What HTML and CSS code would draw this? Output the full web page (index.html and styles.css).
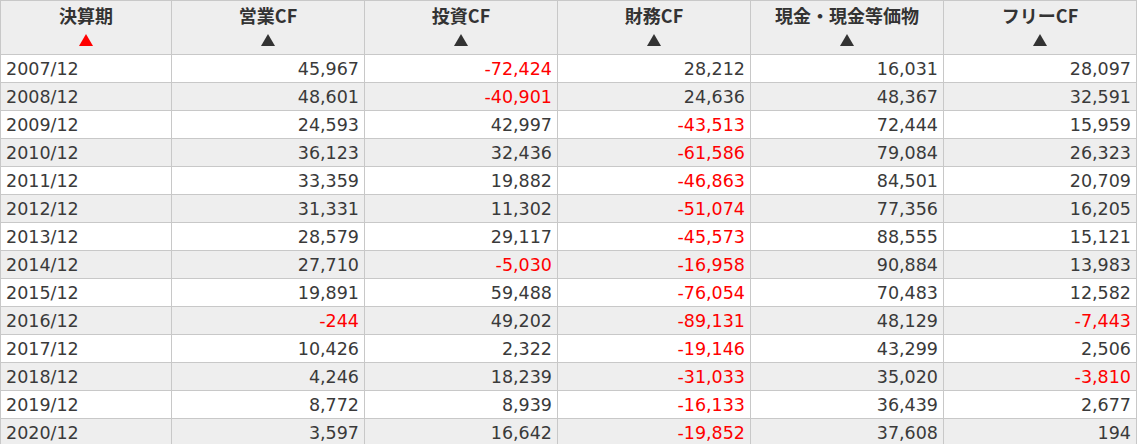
FILE: index.html
```html
<!DOCTYPE html>
<html lang="ja">
<head>
<meta charset="utf-8">
<title>CF</title>
<link rel="stylesheet" href="styles.css">
</head>
<body>
<table class="cf">
  <colgroup>
    <col class="c-date"><col class="c-num"><col class="c-num"><col class="c-num"><col class="c-num"><col class="c-num">
  </colgroup>
  <thead>
    <tr>
      <th><span class="label">決算期</span><span class="arrow active" aria-label="▲"></span></th>
      <th><span class="label">営業CF</span><span class="arrow" aria-label="▲"></span></th>
      <th><span class="label">投資CF</span><span class="arrow" aria-label="▲"></span></th>
      <th><span class="label">財務CF</span><span class="arrow" aria-label="▲"></span></th>
      <th><span class="label">現金・現金等価物</span><span class="arrow" aria-label="▲"></span></th>
      <th><span class="label">フリーCF</span><span class="arrow" aria-label="▲"></span></th>
    </tr>
  </thead>
  <tbody>
    <tr><td>2007/12</td><td>45,967</td><td class="neg">-72,424</td><td>28,212</td><td>16,031</td><td>28,097</td></tr>
    <tr><td>2008/12</td><td>48,601</td><td class="neg">-40,901</td><td>24,636</td><td>48,367</td><td>32,591</td></tr>
    <tr><td>2009/12</td><td>24,593</td><td>42,997</td><td class="neg">-43,513</td><td>72,444</td><td>15,959</td></tr>
    <tr><td>2010/12</td><td>36,123</td><td>32,436</td><td class="neg">-61,586</td><td>79,084</td><td>26,323</td></tr>
    <tr><td>2011/12</td><td>33,359</td><td>19,882</td><td class="neg">-46,863</td><td>84,501</td><td>20,709</td></tr>
    <tr><td>2012/12</td><td>31,331</td><td>11,302</td><td class="neg">-51,074</td><td>77,356</td><td>16,205</td></tr>
    <tr><td>2013/12</td><td>28,579</td><td>29,117</td><td class="neg">-45,573</td><td>88,555</td><td>15,121</td></tr>
    <tr><td>2014/12</td><td>27,710</td><td class="neg">-5,030</td><td class="neg">-16,958</td><td>90,884</td><td>13,983</td></tr>
    <tr><td>2015/12</td><td>19,891</td><td>59,488</td><td class="neg">-76,054</td><td>70,483</td><td>12,582</td></tr>
    <tr><td>2016/12</td><td class="neg">-244</td><td>49,202</td><td class="neg">-89,131</td><td>48,129</td><td class="neg">-7,443</td></tr>
    <tr><td>2017/12</td><td>10,426</td><td>2,322</td><td class="neg">-19,146</td><td>43,299</td><td>2,506</td></tr>
    <tr><td>2018/12</td><td>4,246</td><td>18,239</td><td class="neg">-31,033</td><td>35,020</td><td class="neg">-3,810</td></tr>
    <tr><td>2019/12</td><td>8,772</td><td>8,939</td><td class="neg">-16,133</td><td>36,439</td><td>2,677</td></tr>
    <tr><td>2020/12</td><td>3,597</td><td>16,642</td><td class="neg">-19,852</td><td>37,608</td><td>194</td></tr>
  </tbody>
</table>
</body>
</html>
```
FILE: styles.css
```css
html, body {
  margin: 0;
  padding: 0;
  background: #fff;
}
body {
  font-family: "DejaVu Sans", "Noto Sans CJK JP", sans-serif;
  color: #333;
}
.cf {
  border-collapse: collapse;
  table-layout: fixed;
  width: 1137px;
}
.c-date { width: 171px; }
.c-num { width: 193px; }
.cf th, .cf td {
  border: 1px solid #c8c8c8;
  padding: 0 5px;
}
.cf th {
  background: #eeeeee;
  height: 53px;
  text-align: center;
  vertical-align: top;
  font-family: "Noto Sans CJK JP", sans-serif;
  font-weight: bold;
  font-size: 18px;
}
.label {
  display: block;
  line-height: 20px;
  padding-top: 4px;
}
.arrow {
  display: block;
  width: 0;
  height: 0;
  margin: 9px auto 0;
  border-left: 7px solid transparent;
  border-right: 7px solid transparent;
  border-bottom: 12px solid #333;
}
.arrow.active { border-bottom-color: #ff0000; }
.cf td {
  height: 27px;
  font-size: 17.5px;
  line-height: 20px;
  text-align: right;
  vertical-align: middle;
  color: #3a3a3a;
}
.cf td:first-child { text-align: left; }
.cf tbody tr:nth-child(even) td { background: #eeeeee; }
.cf td.neg { color: #ff0000; }
```
